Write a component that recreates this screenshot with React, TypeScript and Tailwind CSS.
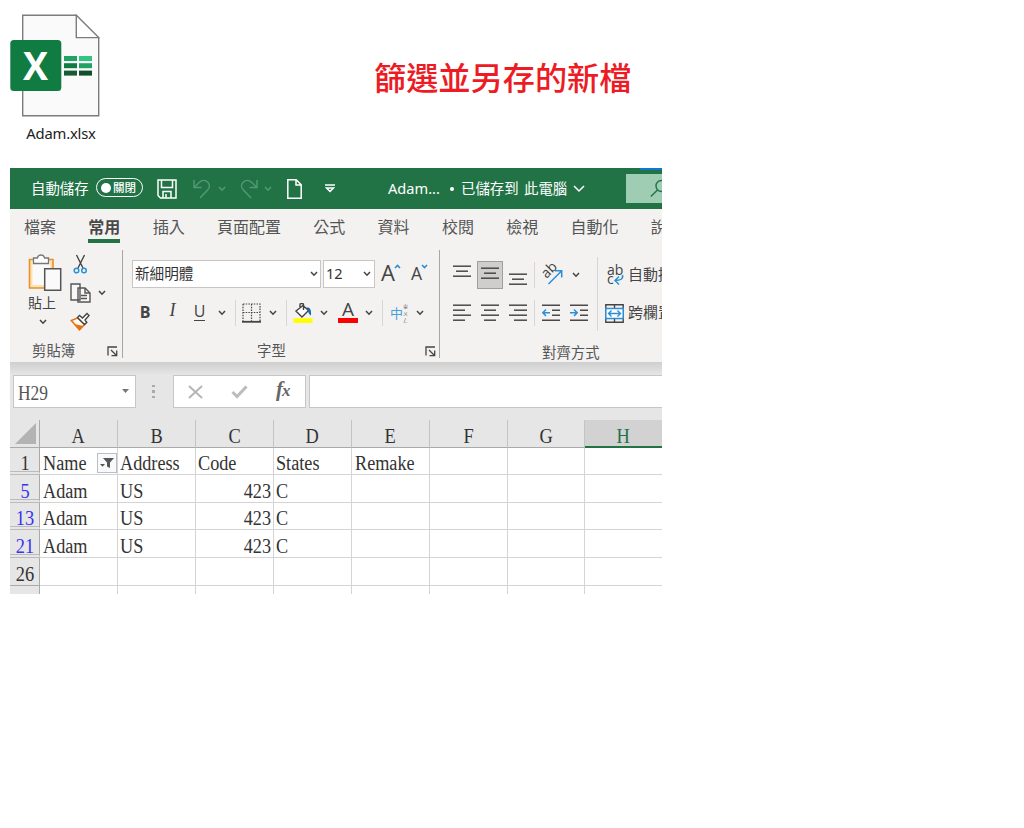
import type { ReactNode } from 'react';
import { clsx } from 'clsx';

interface SheetRow {
  num: string;
  filtered: boolean;
  cells: string[];
}

const tabs = ['檔案', '常用', '插入', '頁面配置', '公式', '資料', '校閱', '檢視', '自動化', '說明'];

const columns = ['A', 'B', 'C', 'D', 'E', 'F', 'G', 'H'];

const rows: SheetRow[] = [
  { num: '1', filtered: false, cells: ['Name', 'Address', 'Code', 'States', 'Remake', '', '', ''] },
  { num: '5', filtered: true, cells: ['Adam', 'US', '423', 'C', '', '', '', ''] },
  { num: '13', filtered: true, cells: ['Adam', 'US', '423', 'C', '', '', '', ''] },
  { num: '21', filtered: true, cells: ['Adam', 'US', '423', 'C', '', '', '', ''] },
  { num: '26', filtered: false, cells: ['', '', '', '', '', '', '', ''] },
];

function Chevron({ className }: { className?: string }) {
  return (
    <svg width="8" height="6" viewBox="0 0 8 6" fill="none" stroke="currentColor" strokeWidth="1.5" className={clsx('shrink-0', className)}>
      <path d="M1 1l3 3.2L7 1" />
    </svg>
  );
}

function Divider({ className }: { className?: string }) {
  return <div className={clsx('w-px', className)} />;
}

function Launcher({ className }: { className?: string }) {
  return (
    <svg width="11" height="11" viewBox="0 0 11 11" fill="none" stroke="#444" strokeWidth="1.3" className={clsx('shrink-0', className)}>
      <path d="M1 9.5V1h9M4 4l5 5M9.7 4.5v5.2H4.5" />
    </svg>
  );
}

// Each entry is a [start, end] pair for one horizontal stroke, spaced evenly
function Lines({ lines, gap = 5, height = 18 }: { lines: number[][]; gap?: number; height?: number }) {
  return (
    <svg width="18" height={height} viewBox={`0 0 18 ${height}`} stroke="#4a4848" strokeWidth="1.5" className="shrink-0">
      {lines.map(([a, b], i) => (
        <path key={i} d={`M${a} ${1.2 + i * gap}H${b}`} />
      ))}
    </svg>
  );
}

function ExcelFile() {
  return (
    <svg width="90" height="103" viewBox="0 0 90 103">
      <path d="M12.7 1.3H66l22.7 22.5v77.9h-76z" fill="#fafafa" stroke="#7c7c7c" strokeWidth="1.4" />
      <path d="M66.3 1.3v22.3h22.4z" fill="#fff" stroke="#7c7c7c" strokeWidth="1.4" />
      <path d="M54 42h13v5H54z" fill="#21a366" />
      <path d="M69 42h13v5H69z" fill="#33c481" />
      <path d="M54 49.2h13v5H54z" fill="#107c41" />
      <path d="M69 49.2h13v5H69z" fill="#21a366" />
      <path d="M54 56.6h13v5H54z" fill="#185c37" />
      <path d="M69 56.6h13v5H69z" fill="#134d2b" />
      <rect x="0.3" y="26" width="51" height="51" rx="3.5" fill="#107c41" />
      <text
        x="25.6"
        y="65.5"
        textAnchor="middle"
        textLength="25"
        lengthAdjust="spacingAndGlyphs"
        fill="#fff"
        fontSize="39"
        fontWeight="700"
        fontFamily="'Open Sans', sans-serif"
      >
        X
      </text>
    </svg>
  );
}

function TitleBar() {
  return (
    <div className="flex h-[41px] items-center bg-[#217346] text-[14.4px] text-white">
      <span className="-mt-0.5 ml-[21px] w-[65px]">自動儲存</span>
      <div className="-mt-0.5 flex h-[19px] w-[47px] items-center rounded-full border border-white pl-1">
        <div className="size-[10px] rounded-full bg-white" />
        <span className="ml-0.5 text-[11.5px] font-medium leading-none">關閉</span>
      </div>
      <svg width="20" height="20" viewBox="0 0 20 20" fill="none" stroke="#fff" strokeWidth="1.5" className="ml-[14px]">
        <path d="M1 1h18v18H3.500L1 16.500zM4.500 1v7.500h11V1M6 19v-6.500h8V19M9 19v-4" />
      </svg>
      <svg width="18" height="20" viewBox="0 0 18 20" fill="none" stroke="#559876" strokeWidth="1.4" className="ml-4">
        <path d="M1 1v7.500h7.500M1.300 8.200L6.500 3.200C9 1 12.500 1 14.800 3.200c2.200 2.200 2.200 5.300 0 7.500L7 19" />
      </svg>
      <Chevron className="ml-[7px] text-[#559876]" />
      <svg width="18" height="20" viewBox="0 0 18 20" fill="none" stroke="#559876" strokeWidth="1.4" className="ml-[14px]">
        <path d="M17 1v7.500H9.500M16.700 8.200L11.500 3.200C9 1 5.500 1 3.200 3.200 1 5.400 1 8.500 3.200 10.700L11 19" />
      </svg>
      <Chevron className="ml-[6px] text-[#559876]" />
      <svg width="15" height="20" viewBox="0 0 15 20" fill="none" stroke="#fff" strokeWidth="1.5" className="ml-[15px]">
        <path d="M.8.8h8.400l5 5v13.400H.8zM9 1v5h5" />
      </svg>
      <svg width="10" height="9" viewBox="0 0 10 9" fill="none" stroke="#fff" strokeWidth="1.5" className="ml-[23px]">
        <path d="M0 1h10M1.500 4L5 7.500 8.500 4z" />
      </svg>
      <span className="ml-[53px] w-[53px] whitespace-nowrap font-['Noto_Sans'] text-[14.6px]">Adam...</span>
      <div className="ml-[9px] size-[4px] rounded-full bg-white" />
      <span className="-mt-0.5 ml-[7px] w-[63px] whitespace-nowrap">已儲存到</span>
      <span className="-mt-0.5 whitespace-nowrap">此電腦</span>
      <svg width="12" height="8" viewBox="0 0 12 8" fill="none" stroke="#fff" strokeWidth="1.5" className="ml-[6px] shrink-0">
        <path d="M1 1l5 5 5-5" />
      </svg>
      <div className="ml-auto flex h-full w-[36px] flex-col overflow-hidden">
        <div className="ml-[14px] h-[2px] shrink-0 bg-[#0f78d4]" />
        <div className="mt-1 flex h-[29px] items-center bg-[#9fcdb3] pl-6">
          <svg width="18" height="19" viewBox="0 0 18 19" fill="none" stroke="#217346" strokeWidth="1.4" className="shrink-0">
            <circle cx="11.500" cy="7" r="5.500" />
            <path d="M7.500 11L.8 17.500" />
          </svg>
        </div>
      </div>
    </div>
  );
}

function Tabs() {
  return (
    <div className="flex h-[36px] gap-[32.3px] overflow-hidden bg-[#f3f2f1] pl-[14px] text-[16px] text-[#555]">
      {tabs.map((tab) => (
        <div
          key={tab}
          className={clsx(
            'flex h-[34px] shrink-0 items-center whitespace-nowrap border-b-4 pt-[3px]',
            tab === '常用' ? 'border-[#217346] font-bold text-[#4a4948]' : 'border-transparent'
          )}
        >
          {tab}
        </div>
      ))}
    </div>
  );
}

function Group({ className, children }: { className?: string; children: ReactNode }) {
  return <div className={clsx('flex h-full shrink-0 flex-col', className)}>{children}</div>;
}

function ClipboardGroup() {
  return (
    <Group className="w-[112px]">
      <div className="flex h-[95px]">
        <div className="ml-[18px] mt-[9px] flex w-[34px] flex-col">
          <svg width="34" height="38" viewBox="0 0 34 38" fill="none">
            <path d="M1.500 5.500H25V34H1.500z" fill="#fbe3b0" stroke="#e8912d" strokeWidth="1.600" />
            <path d="M4.500 8H22v23H4.500z" fill="#fafafa" />
            <path d="M5.500 4h4c.5-4 6.500-4 7 0h4v5.500h-15z" fill="#fff" stroke="#777" strokeWidth="1.300" />
            <path d="M16.700 14.700h16v21.500h-16z" fill="#fafafa" stroke="#555" strokeWidth="1.500" />
          </svg>
          <span className="mt-px text-[14px] leading-[19px] text-[#444]">貼上</span>
          <Chevron className="ml-[11px] mt-[7px] text-[#444]" />
        </div>
        <div className="ml-2 mt-[9px] flex flex-col">
          <svg width="20" height="20" viewBox="0 0 20 20" fill="none">
            <path d="M6.500 1l6.500 13M14.500 1L8 14" stroke="#444" strokeWidth="1.400" />
            <circle cx="6.500" cy="16.500" r="2.300" stroke="#2b8fd6" strokeWidth="1.500" />
            <circle cx="14" cy="16.500" r="2.300" stroke="#2b8fd6" strokeWidth="1.500" />
          </svg>
          <div className="mt-[9px] flex items-center">
            <svg width="21" height="20" viewBox="0 0 21 20" fill="#f8f8f8" stroke="#555" strokeWidth="1.400">
              <path d="M1 1h9v16H1zM8 5h7l5 5v9H8z" />
              <path d="M15 5v5h5M11 12.500h6M11 15.500h6" fill="none" />
            </svg>
            <Chevron className="ml-[7px] text-[#444]" />
          </div>
          <svg width="21" height="19" viewBox="0 0 21 19" fill="none" className="mt-[9px]">
            <path d="M1.300 8.500L7.500 6l7 6.500-5 5.300z" fill="#fff" stroke="#e8730e" strokeWidth="1.500" />
            <path d="M4.500 12l9 2-4 4z" fill="#e8730e" />
            <path d="M7.500 5.500l2-2 3 2.500 4.500-4.500 2 2-4 4.500 1.800 2.500-2.300 2z" fill="#fff" stroke="#444" strokeWidth="1.400" />
          </svg>
        </div>
      </div>
      <div className="flex h-[24px] items-center pl-[22px] text-[14.400px] text-[#555]">
        <span>剪貼簿</span>
        <Launcher className="ml-[32px] mt-0.5" />
      </div>
    </Group>
  );
}

function FontGroup() {
  return (
    <Group className="w-[317px]">
      <div className="ml-[9px] mt-[15px] flex h-[29px] items-center">
        <div className="flex h-full w-[189px] items-center border border-[#c8c6c4] bg-white pl-[2px] pr-0.5">
          <span className="-mt-0.5 text-[14.600px] text-[#333]">新細明體</span>
          <Chevron className="ml-auto text-[#444]" />
        </div>
        <div className="ml-0.5 flex h-full w-[52px] items-center border border-[#c8c6c4] bg-white pl-[2px] pr-[3px]">
          <span className="font-['Noto_Sans'] text-[14.500px] text-[#333]">12</span>
          <Chevron className="ml-auto text-[#444]" />
        </div>
        <div className="ml-[6px] flex h-full text-[#444]">
          <span className="font-['Open_Sans'] text-[22px] leading-[24px]">A</span>
          <svg width="7" height="5" viewBox="0 0 7 5" fill="none" stroke="#2b8fd6" strokeWidth="1.600" className="-ml-px mt-1">
            <path d="M1 4l2.500-2.500L6 4" />
          </svg>
        </div>
        <div className="ml-[10px] flex h-full text-[#444]">
          <span className="font-['Open_Sans'] text-[17.500px] leading-[26px]">A</span>
          <svg width="7" height="5" viewBox="0 0 7 5" fill="none" stroke="#2b8fd6" strokeWidth="1.600" className="-ml-px mt-1">
            <path d="M1 1l2.500 2.500L6 1" />
          </svg>
        </div>
      </div>
      <div className="mt-[10px] grid h-[30px] grid-cols-[28px_27px_27px_17px_10px_22px_22px_4px_29px_14px_34px_8px_18px_17px_24px] items-center justify-items-center pl-2 text-[#444]">
        <span className="-mt-0.5 font-['Open_Sans'] text-[16px] font-bold">B</span>
        <span className="-mt-1 font-['Liberation_Serif'] text-[18px] italic">I</span>
        <span className="-mt-px border-b border-[#444] font-['Open_Sans'] text-[16px] leading-[17px]">U</span>
        <Chevron />
        <Divider className="h-[26px] bg-[#d6d6d6]" />
        <svg width="19" height="20" viewBox="0 0 19 20" fill="none" stroke="#444" strokeWidth="1.200">
          <path d="M1 1h17v17M1 1v17M9.500 1v17M1 9.500h17" strokeDasharray="1.500 1.200" />
          <path d="M0 18.800h19" strokeWidth="1.800" />
        </svg>
        <Chevron />
        <Divider className="h-[26px] bg-[#d6d6d6]" />
        <svg width="20" height="20" viewBox="0 0 20 20" fill="none">
          <path d="M10 2.500l5.500 5-6.500 6.500-6-6zM7 5.500V1.500c0-1.300 3.500-1.300 3.500 0V7" fill="#fff" stroke="#444" strokeWidth="1.400" />
          <path d="M13.500 4.500c3.500-.5 5 2 4.500 8-2-1-2.500-3-4.500-8z" fill="#1d68a7" />
          <path d="M.5 15.200h19v4.800H.5z" fill="#ff0" />
        </svg>
        <Chevron />
        <div className="flex h-5 w-5 flex-col items-center">
          <span className="h-[15px] font-['Open_Sans'] text-[19px] leading-[13px]">A</span>
          <div className="h-[5px] w-full bg-[#f00]" />
        </div>
        <Chevron />
        <Divider className="h-[26px] bg-[#d6d6d6]" />
        <div className="flex items-center">
          <span className="text-[13px] leading-none text-[#4ba0da]">中</span>
          <span className="flex w-[6px] flex-col gap-px text-[5px] leading-[6px] text-[#555]">
            <span>ㄓ</span>
            <span>ㄨ</span>
            <span>ㄥ</span>
          </span>
        </div>
        <Chevron />
      </div>
      <div className="mt-[11px] flex h-[24px] items-center pl-[134px] text-[14.400px] text-[#555]">
        <span>字型</span>
        <Launcher className="ml-[139px] mt-0.5" />
      </div>
    </Group>
  );
}

function AlignmentGroup() {
  return (
    <Group className="w-[222px] overflow-hidden">
      <div className="flex h-[83px]">
        <div className="w-[157px] shrink-0">
          <div className="mt-4 grid h-[28px] grid-cols-[28px_28px_28px_5px_30px_18px] items-center justify-items-center pl-2">
            <div className="mb-2">
              <Lines lines={[[0, 18], [3, 15], [0, 18]]} height={12} />
            </div>
            <div className="flex h-[28px] w-[26px] items-center justify-center border border-[#a19f9d] bg-[#d0cecc] pb-1">
              <Lines lines={[[0, 18], [3, 15], [0, 18]]} height={12} />
            </div>
            <div className="mt-2">
              <Lines lines={[[0, 18], [3, 15], [0, 18]]} height={12} />
            </div>
            <Divider className="h-[26px] bg-[#d6d6d6]" />
            <svg width="22" height="20" viewBox="0 0 22 20" className="overflow-visible">
              <text x="0" y="0" transform="translate(5.500 14) rotate(-45)" fontSize="14" fontFamily="'Open Sans', sans-serif" fill="#444">
                ab
              </text>
              <path d="M7.500 19L20 6.500M14 5.700h6.700v6.700" fill="none" stroke="#2b8fd6" strokeWidth="1.500" />
            </svg>
            <Chevron className="text-[#444]" />
          </div>
          <div className="mt-[10px] grid h-[28px] grid-cols-[28px_28px_28px_5px_28px_28px] items-center justify-items-center pl-2">
            <Lines lines={[[0, 18], [0, 12], [0, 18], [0, 12]]} />
            <Lines lines={[[0, 18], [3, 15], [0, 18], [3, 15]]} />
            <Lines lines={[[0, 18], [5, 18], [0, 18], [5, 18]]} />
            <Divider className="h-[26px] bg-[#d6d6d6]" />
            <svg width="19" height="18" viewBox="0 0 19 18" fill="none" stroke="#4a4848" strokeWidth="1.500">
              <path d="M0 1.200h18M10 6.200h8M10 11.200h8M0 16.200h18" />
              <path d="M8 8.700H1M4 5.500L.8 8.700 4 11.900" stroke="#2b8fd6" />
            </svg>
            <svg width="19" height="18" viewBox="0 0 19 18" fill="none" stroke="#4a4848" strokeWidth="1.500">
              <path d="M0 1.200h18M10 6.200h8M10 11.200h8M0 16.200h18" />
              <path d="M0 8.700h7M4 5.500l3.200 3.200L4 11.900" stroke="#2b8fd6" />
            </svg>
          </div>
        </div>
        <Divider className="mt-3 h-[74px] shrink-0 bg-[#d6d6d6]" />
        <div className="ml-[7px] mt-4 text-[15px] text-[#444]">
          <div className="flex h-[28px] items-center whitespace-nowrap">
            <svg width="20" height="22" viewBox="0 0 20 22" className="mr-[3px] shrink-0 overflow-visible">
              <text x="2" y="11" fontSize="14" fontFamily="'Open Sans', sans-serif" fill="#444">
                ab
                <tspan x="2" dy="9">c</tspan>
              </text>
              <path d="M17.500 11c1 4-2 5.500-7.500 5.500M14 12.500l-4 4 4 4" fill="none" stroke="#2b8fd6" strokeWidth="1.500" />
            </svg>
            <span className="-mt-0.5">自動換列</span>
          </div>
          <div className="mt-[10px] flex h-[28px] items-center whitespace-nowrap">
            <svg width="19" height="19" viewBox="0 0 19 19" fill="none" className="mr-1 shrink-0">
              <path d="M.8.8h17.400v17.400H.8zM9.500 1v3M9.500 15v3" stroke="#444" strokeWidth="1.400" />
              <path d="M.8 4.500h17.400v10H.8z" fill="#fff" stroke="#2b8fd6" strokeWidth="1.500" />
              <path d="M3.500 9.500h12M6.500 6.500l-3 3 3 3M12.500 6.500l3 3-3 3" stroke="#2b8fd6" strokeWidth="1.400" />
            </svg>
            <span className="-mt-0.5">跨欄置中</span>
          </div>
        </div>
      </div>
      <div className="mt-3 flex h-[24px] shrink-0 items-center pl-[102px] text-[14.400px] text-[#555]">對齊方式</div>
    </Group>
  );
}

function FormulaBar() {
  return (
    <div className="flex h-[33px] items-center">
      <div className="ml-[3px] flex h-full w-[123px] items-center border border-[#c6c6c6] bg-white pl-1">
        <span className="mt-0.5 origin-left scale-x-[.87] font-['Liberation_Serif'] text-[20px] text-[#555]">H29</span>
        <svg width="7" height="4" viewBox="0 0 7 4" className="mb-0.5 ml-auto mr-[6px]">
          <path d="M0 0h7L3.500 4z" fill="#777" />
        </svg>
      </div>
      <div className="ml-4 flex w-[3px] flex-col gap-[3px]">
        <div className="size-[2.500px] bg-[#aaa]" />
        <div className="size-[2.500px] bg-[#aaa]" />
        <div className="size-[2.500px] bg-[#aaa]" />
      </div>
      <div className="ml-[18px] flex h-full w-[133px] items-center border border-[#c6c6c6] bg-white pl-[14px]">
        <svg width="15" height="14" viewBox="0 0 15 14" stroke="#b5b5b5" strokeWidth="2">
          <path d="M1 1l13 12M14 1L1 13" />
        </svg>
        <svg width="17" height="14" viewBox="0 0 17 14" fill="none" stroke="#bcbcbc" strokeWidth="3" className="ml-[28px]">
          <path d="M1.500 7l4.500 4.500L15.500 1.500" />
        </svg>
        <span className="-mt-1 ml-[28px] font-['Liberation_Serif'] text-[21px] font-bold italic leading-none text-[#666]">
          f<span className="-ml-px text-[17px]">x</span>
        </span>
      </div>
      <div className="ml-[3px] h-full flex-1 border border-r-0 border-[#c6c6c6] bg-white" />
    </div>
  );
}

function SheetCells({ row }: { row: SheetRow }) {
  return (
    <>
      <div
        className={clsx(
          'flex items-center justify-center border-r border-[#aaa] bg-[#e6e6e6]',
          row.num === '26' ? 'border-b pt-1' : 'border-b-4 border-b-[#bbb] pt-[7px] [border-bottom-style:double]',
          row.filtered && 'text-[#3b32f0]'
        )}
      >
        <span className="scale-x-[.92]">{row.num}</span>
      </div>
      {row.cells.map((cell, i) => (
        <div
          key={i}
          className={clsx(
            'flex items-center border-b border-[#d4d4d4]',
            row.num === '1' ? 'pt-[3px]' : 'pt-[4px]',
            i < 7 && 'border-r',
            i === 0 || i === 4 ? 'pl-[3px]' : 'pl-0.5',
            cell === '423' && 'justify-end pr-0.5'
          )}
        >
          <span className={clsx('scale-x-[.91]', cell === '423' ? 'origin-right' : 'origin-left')}>{cell}</span>
          {cell === 'Name' && (
            <div className="ml-auto flex h-[20px] w-[20px] shrink-0 items-center justify-center border border-[#b9bfca] bg-[#f8f9fb]">
              <svg width="14" height="10" viewBox="0 0 14 10" fill="#555">
                <path d="M3 0h11L10 4.500V10l-3-1.500v-4zM0 6h5L2.500 8.800z" />
              </svg>
            </div>
          )}
        </div>
      ))}
    </>
  );
}

function Sheet() {
  return (
    <div className="mt-3 grid grid-cols-[30px_78px_78px_78px_78px_78px_78px_77px_77px] grid-rows-[28px_27px_28px_27px_28px_28px_9px] overflow-hidden bg-white font-['Liberation_Serif'] text-[20px] leading-none text-[#333]">
      <div className="flex items-end justify-end border-b border-r border-[#aaa] bg-[#e6e6e6] pb-[3px] pr-[3px]">
        <svg width="21" height="21" viewBox="0 0 21 21">
          <path d="M21 0v21H0z" fill="#b3b3b3" />
        </svg>
      </div>
      {columns.map((col) => (
        <div
          key={col}
          className={clsx(
            'flex items-center justify-center pt-1',
            col === 'H'
              ? 'border-b-2 border-b-[#217346] bg-[#d2d2d2] pt-[5px] text-[#217346]'
              : 'border-b border-r border-b-[#aaa] border-r-[#c4c4c4] bg-[#e6e6e6]'
          )}
        >
          <span className="scale-x-[.92]">{col}</span>
        </div>
      ))}
      {rows.map((row) => (
        <SheetCells key={row.num} row={row} />
      ))}
      <div className="border-r border-[#aaa] bg-[#e6e6e6]" />
      {columns.map((col) => (
        <div key={col} className="border-r border-[#d4d4d4] last:border-r-0" />
      ))}
    </div>
  );
}

export default function App() {
  return (
    <div className="h-[828px] w-[1024px] overflow-hidden bg-white font-['Noto_Sans_CJK_TC',sans-serif]">
      <div className="flex h-[168px]">
        <div className="ml-[10px] mt-[14px] flex w-[102px] flex-col">
          <ExcelFile />
          <span className="mt-1 text-center font-['Noto_Sans'] text-[14.800px] leading-6 tracking-[-0.2px] text-[#222]">Adam.xlsx</span>
        </div>
        <h1 className="ml-[262px] mt-[52px] text-[32.200px] font-medium leading-[48px] text-[#ed1c24]">篩選並另存的新檔</h1>
      </div>
      <div className="ml-[10px] h-[426px] w-[652px] overflow-hidden bg-[#e6e6e6]">
        <TitleBar />
        <Tabs />
        <div className="flex h-[117px] overflow-hidden bg-[#f3f2f1]">
          <ClipboardGroup />
          <Divider className="mt-[5px] h-[108px] bg-[#a6a6a6]" />
          <FontGroup />
          <Divider className="-ml-px mt-[5px] h-[108px] bg-[#a6a6a6]" />
          <AlignmentGroup />
        </div>
        <div className="h-[13px] bg-linear-to-b from-[#cfcfcf] to-[#e6e6e6]" />
        <FormulaBar />
        <Sheet />
      </div>
    </div>
  );
}
